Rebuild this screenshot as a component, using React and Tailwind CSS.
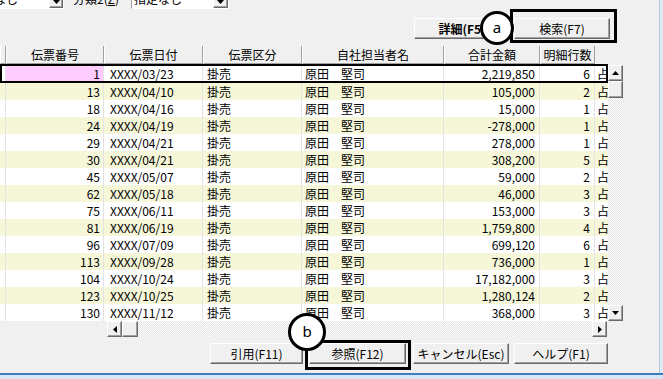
import React from 'react';

const rows = [
  ['1', 'XXXX/03/23', '2,219,850', '6'],
  ['13', 'XXXX/04/10', '105,000', '2'],
  ['18', 'XXXX/04/16', '15,000', '1'],
  ['24', 'XXXX/04/19', '-278,000', '1'],
  ['29', 'XXXX/04/21', '278,000', '1'],
  ['30', 'XXXX/04/21', '308,200', '5'],
  ['45', 'XXXX/05/07', '59,000', '2'],
  ['62', 'XXXX/05/18', '46,000', '3'],
  ['75', 'XXXX/06/11', '153,000', '3'],
  ['81', 'XXXX/06/19', '1,759,800', '4'],
  ['96', 'XXXX/07/09', '699,120', '6'],
  ['113', 'XXXX/09/28', '736,000', '1'],
  ['104', 'XXXX/10/24', '17,182,000', '3'],
  ['123', 'XXXX/10/25', '1,280,124', '2'],
  ['130', 'XXXX/11/12', '368,000', '3'],
];

const raised =
  'border border-t-white border-l-white border-r-[#696969] border-b-[#696969] shadow-[inset_-1px_-1px_0_#a0a0a0] bg-[#f0f0f0]';
const dither =
  'bg-[image:repeating-conic-gradient(#ffffff_0%_25%,#e3e3e3_0%_50%)] bg-[length:2px_2px]';

const Arrow = ({ dir }) => {
  const pts = {
    up: '0,4 7,4 3.5,0',
    down: '0,0 7,0 3.5,4',
    left: '4,0 4,7 0,3.5',
    right: '0,0 0,7 4,3.5',
  }[dir];
  const vert = dir === 'up' || dir === 'down';
  return (
    <svg width={vert ? 7 : 4} height={vert ? 4 : 7} viewBox={vert ? '0 0 7 4' : '0 0 4 7'}>
      <polygon points={pts} fill="#000" />
    </svg>
  );
};

const Button = ({ className, children, bold }) => (
  <div
    className={`${raised} h-[21px] flex items-center justify-center text-[12px] leading-none text-black ${bold ? 'font-bold' : ''} ${className}`}
  >
    {children}
  </div>
);

const Row = ({ r, i }) => {
  const sel = i === 0;
  const bg = i % 2 === 1 ? 'bg-[#f5f7d8]' : 'bg-white';
  const cell = 'h-full border-r border-[#e3e3e3] flex items-center whitespace-nowrap overflow-hidden';
  return (
    <div className={`flex w-[608px] ${bg} ${sel ? 'h-[19px] border-2 border-black' : 'h-[17px]'}`}>
      <div className={`${cell} ${sel ? 'w-[4px]' : 'w-[6px]'}`} />
      <div className={`${cell} w-[98px] justify-end pr-[3px] ${sel ? 'bg-[#ffccff]' : ''}`}>{r[0]}</div>
      <div className={`${cell} w-[99px] pl-[6px]`}>{r[1]}</div>
      <div className={`${cell} w-[99px] pl-[4px]`}>掛売</div>
      <div className={`${cell} w-[142px] pl-[3px]`}>原田　堅司</div>
      <div className={`${cell} w-[96px] justify-end pr-[4px]`}>{r[2]}</div>
      <div className={`${cell} w-[55px] justify-end pr-[4px]`}>{r[3]}</div>
      <div className={`h-full flex items-center overflow-hidden pl-[2px] ${sel ? 'w-[11px]' : 'w-[13px]'}`}>占</div>
    </div>
  );
};

const heads = [
  ['w-[6px]', ''],
  ['w-[98px]', '伝票番号'],
  ['w-[99px]', '伝票日付'],
  ['w-[99px]', '伝票区分'],
  ['w-[142px]', '自社担当者名'],
  ['w-[96px]', '合計金額'],
  ['w-[55px]', '明細行数'],
];

export default function App() {
  return (
    <div className="w-[663px] h-[379px] bg-[#f0f0f0] relative overflow-hidden flex flex-col text-black font-['Noto_Sans_CJK_JP',sans-serif] text-[12px]">
      <div className="flex h-[373px]">
        <div className="w-[659px] flex flex-col overflow-hidden">
          {/* combo row (cut off at top) */}
          <div className="flex h-[20px] -mt-[11px] items-stretch">
            <div className="w-[98px] -ml-[34px] bg-white border border-t-[#a0a0a0] border-l-[#a0a0a0] border-b-white border-r-white flex items-center">
              <span className="pl-[3px] flex-1">指定なし</span>
              <div className={`${raised} w-[14px] h-full flex items-end justify-center pb-[3px]`}>
                <Arrow dir="down" />
              </div>
            </div>
            <div className="ml-[9px] flex items-center w-[58px]">
              分類2(<span className="underline">Z</span>)
            </div>
            <div className="w-[98px] bg-white border border-t-[#a0a0a0] border-l-[#a0a0a0] border-b-white border-r-white flex items-center">
              <span className="pl-[2px] flex-1">指定なし</span>
              <div className={`${raised} w-[15px] h-full flex items-end justify-center pb-[3px]`}>
                <Arrow dir="down" />
              </div>
            </div>
          </div>

          {/* top buttons */}
          <div className="flex mt-[9px] ml-[414px] h-[19px]">
            <Button className="w-[96px] h-[19px]" bold>
              詳細(F5)
            </Button>
            <Button className="w-[96px] h-[19px] ml-[4px]">検索(F7)</Button>
          </div>

          {/* header */}
          <div className="flex mt-[9px] h-[18px]">
            {heads.map(([w, t], k) => (
              <div
                key={k}
                className={`${w} h-full border-l border-l-white border-r border-r-[#a0a0a0] border-b border-b-[#a0a0a0] flex items-center justify-center whitespace-nowrap`}
              >
                {t}
              </div>
            ))}
          </div>

          {/* body */}
          <div className="flex h-[257px]">
            <div className="w-[608px] flex flex-col overflow-hidden">
              {rows.map((r, i) => (
                <Row key={i} r={r} i={i} />
              ))}
            </div>
            <div className="w-[15px] flex flex-col">
              <div className={`${raised} mt-[1px] h-[16px] flex items-center justify-center`}>
                <Arrow dir="up" />
              </div>
              <div className={`${raised} h-[17px]`} />
              <div className={`flex-1 ${dither}`} />
              <div className={`${raised} h-[16px] flex items-center justify-center`}>
                <Arrow dir="down" />
              </div>
            </div>
          </div>

          {/* horizontal scrollbar */}
          <div className="flex h-[16px] w-[607px]">
            <div className="w-[107px]" />
            <div className={`${raised} w-[15px] flex items-center justify-center`}>
              <Arrow dir="left" />
            </div>
            <div className={`${raised} w-[16px]`} />
            <div className={`flex-1 ${dither}`} />
            <div className={`${raised} w-[15px] flex items-center justify-center`}>
              <Arrow dir="right" />
            </div>
          </div>

          {/* bottom buttons */}
          <div className="flex mt-[6px] ml-[210px]">
            <Button className="w-[93px]">引用(F11)</Button>
            <Button className="w-[97px] ml-[6px]">参照(F12)</Button>
            <Button className="w-[96px] ml-[7px]">キャンセル(Esc)</Button>
            <Button className="w-[94px] ml-[5px]">ヘルプ(F1)</Button>
          </div>
        </div>
        <div className="flex-1 border-l border-l-[#b8c8d8] bg-[#dde9f5]" />
      </div>
      <div className="h-[2px] bg-[#3b7dbd]" />
      <div className="flex-1 bg-[#d6e6f5]" />

      {/* annotations */}
      <div className="absolute left-[510px] top-[9px] w-[107px] h-[34px] border-[3px] border-black" />
      <div className="absolute left-[305px] top-[340px] w-[106px] h-[30px] border-[3px] border-black" />
      <div className="absolute left-[480px] top-[11px] w-[34px] h-[34px] rounded-full border-[3px] border-black bg-white flex items-center justify-center font-['Noto_Sans',sans-serif] text-[15px] leading-none pb-[2px]">
        a
      </div>
      <div className="absolute left-[288px] top-[313px] w-[38px] h-[38px] rounded-full border-[3px] border-black bg-white flex items-center justify-center font-['Noto_Sans',sans-serif] text-[15px] leading-none pb-[2px]">
        b
      </div>
    </div>
  );
}
